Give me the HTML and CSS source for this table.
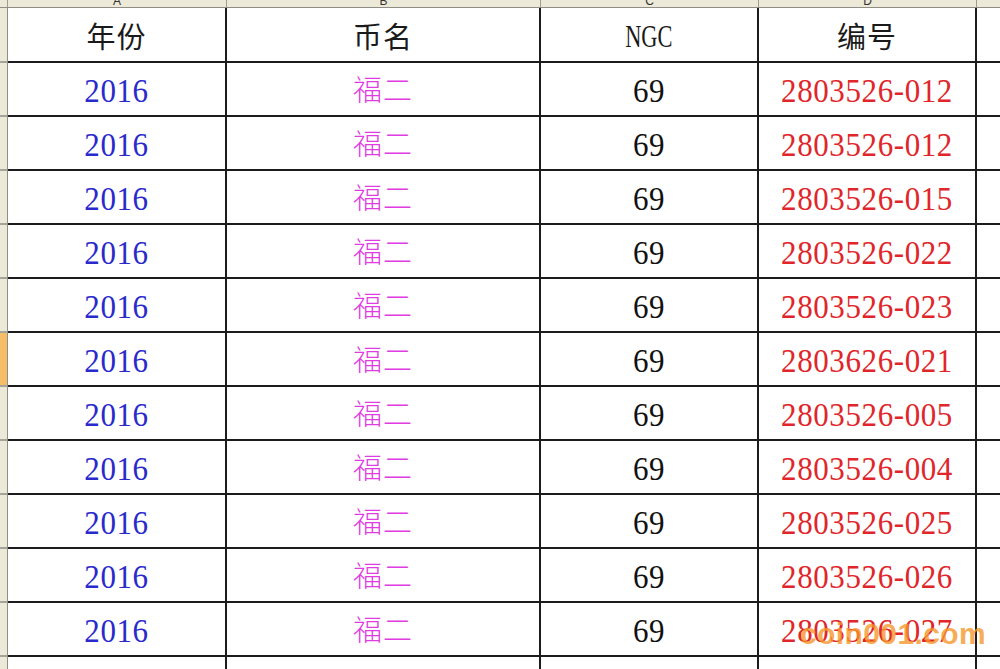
FILE: index.html
```html
<!DOCTYPE html>
<html lang="zh-CN">
<head>
<meta charset="utf-8">
<title>2016 福二 NGC</title>
<link rel="stylesheet" href="styles.css">
</head>
<body>
<div class="sheet">
  <div class="colhead">
    <div class="hc corner"></div>
    <div class="hc"><span>A</span></div>
    <div class="hc"><span>B</span></div>
    <div class="hc"><span>C</span></div>
    <div class="hc"><span>D</span></div>
    <div class="hc"></div>
  </div>
  <div class="body">
    <div class="rowheads">
      <div class="rh first"></div>
      <div class="rh"></div><div class="rh"></div><div class="rh"></div>
      <div class="rh"></div><div class="rh"></div><div class="rh active"></div>
      <div class="rh"></div><div class="rh"></div><div class="rh"></div>
      <div class="rh"></div><div class="rh"></div><div class="rh last"></div>
    </div>
    <div class="grid">
      <div class="c head"><span class="cjk">年份</span></div>
      <div class="c head"><span class="cjk">币名</span></div>
      <div class="c head"><span class="ngc">NGC</span></div>
      <div class="c head"><span class="cjk">编号</span></div>
      <div class="c"></div>

      <div class="c"><span class="num blue">2016</span></div><div class="c"><span class="cjk pink">福二</span></div><div class="c"><span class="num">69</span></div><div class="c"><span class="num red">2803526-012</span></div><div class="c"></div>
      <div class="c"><span class="num blue">2016</span></div><div class="c"><span class="cjk pink">福二</span></div><div class="c"><span class="num">69</span></div><div class="c"><span class="num red">2803526-012</span></div><div class="c"></div>
      <div class="c"><span class="num blue">2016</span></div><div class="c"><span class="cjk pink">福二</span></div><div class="c"><span class="num">69</span></div><div class="c"><span class="num red">2803526-015</span></div><div class="c"></div>
      <div class="c"><span class="num blue">2016</span></div><div class="c"><span class="cjk pink">福二</span></div><div class="c"><span class="num">69</span></div><div class="c"><span class="num red">2803526-022</span></div><div class="c"></div>
      <div class="c"><span class="num blue">2016</span></div><div class="c"><span class="cjk pink">福二</span></div><div class="c"><span class="num">69</span></div><div class="c"><span class="num red">2803526-023</span></div><div class="c"></div>
      <div class="c"><span class="num blue">2016</span></div><div class="c"><span class="cjk pink">福二</span></div><div class="c"><span class="num">69</span></div><div class="c"><span class="num red">2803626-021</span></div><div class="c"></div>
      <div class="c"><span class="num blue">2016</span></div><div class="c"><span class="cjk pink">福二</span></div><div class="c"><span class="num">69</span></div><div class="c"><span class="num red">2803526-005</span></div><div class="c"></div>
      <div class="c"><span class="num blue">2016</span></div><div class="c"><span class="cjk pink">福二</span></div><div class="c"><span class="num">69</span></div><div class="c"><span class="num red">2803526-004</span></div><div class="c"></div>
      <div class="c"><span class="num blue">2016</span></div><div class="c"><span class="cjk pink">福二</span></div><div class="c"><span class="num">69</span></div><div class="c"><span class="num red">2803526-025</span></div><div class="c"></div>
      <div class="c"><span class="num blue">2016</span></div><div class="c"><span class="cjk pink">福二</span></div><div class="c"><span class="num">69</span></div><div class="c"><span class="num red">2803526-026</span></div><div class="c"></div>
      <div class="c"><span class="num blue">2016</span></div><div class="c"><span class="cjk pink">福二</span></div><div class="c"><span class="num">69</span></div><div class="c"><span class="num red">2803526-027</span></div><div class="c"></div>

      <div class="c tail"></div><div class="c tail"></div><div class="c tail"></div><div class="c tail"></div><div class="c tail"></div>
    </div>
  </div>
  <div class="watermark">coin001.com</div>
</div>
</body>
</html>
```

FILE: styles.css
```css
html, body {
  margin: 0;
  padding: 0;
  background: #ffffff;
}

body {
  width: 1000px;
  height: 669px;
  overflow: hidden;
}

.sheet {
  position: relative;
  width: 1000px;
  height: 669px;
  overflow: hidden;
}

.colhead {
  display: grid;
  grid-template-columns: 7px 218px 313px 217px 217px 1fr;
  column-gap: 1px;
  height: 7px;
  background: #9c9c92;
  border-bottom: 1px solid #8e8e86;
}

.hc {
  background: #ece9d8;
  overflow: hidden;
  display: flex;
  justify-content: center;
  font-family: "Liberation Sans", Arial, sans-serif;
  font-size: 12px;
  line-height: 2px;
  color: #333333;
}

.body {
  display: flex;
}

.rowheads {
  width: 7px;
  display: grid;
  grid-template-rows: 53px repeat(11, 52px) 20px;
  row-gap: 2px;
  background: #a3a39a;
  border-right: 1px solid #8e8e86;
}

.rh {
  background: #ece9d8;
}

.rh.active {
  background: #f6bd68;
}

.grid {
  flex: 1;
  display: grid;
  grid-template-columns: 217px 312px 216px 216px 1fr;
  grid-template-rows: 53px repeat(11, 52px) 20px;
  gap: 2px;
  background: #1c1c1c;
}

.c {
  background: #ffffff;
  display: flex;
  align-items: center;
  justify-content: center;
  padding-top: 3px;
  box-sizing: border-box;
}

.num {
  display: inline-block;
  font-family: "Liberation Serif", "Times New Roman", serif;
  font-size: 31px;
  letter-spacing: 0.6px;
  color: #111111;
  transform: scaleY(1.1);
}

.cjk {
  display: inline-block;
  font-family: "Noto Sans CJK SC", "Noto Sans CJK JP", sans-serif;
  font-size: 29px;
  font-weight: 300;
  letter-spacing: 1px;
  color: #111111;
  transform: translateY(-3px);
}

.head .cjk {
  font-weight: 400;
  color: #1a1a1a;
  transform: translateY(-1px);
}

.ngc {
  display: inline-block;
  font-family: "Liberation Serif", "Times New Roman", serif;
  font-size: 32px;
  color: #1a1a1a;
  transform: scaleX(0.7);
}

.blue {
  color: #2a2acc;
}

.pink {
  color: #e03ce2;
}

.red {
  color: #e0262a;
}

.watermark {
  position: absolute;
  left: 800px;
  top: 617px;
  font-family: "Liberation Sans", Arial, sans-serif;
  font-weight: 700;
  font-size: 30px;
  line-height: 34px;
  letter-spacing: 0.4px;
  color: rgba(246, 150, 40, 0.8);
}
```
